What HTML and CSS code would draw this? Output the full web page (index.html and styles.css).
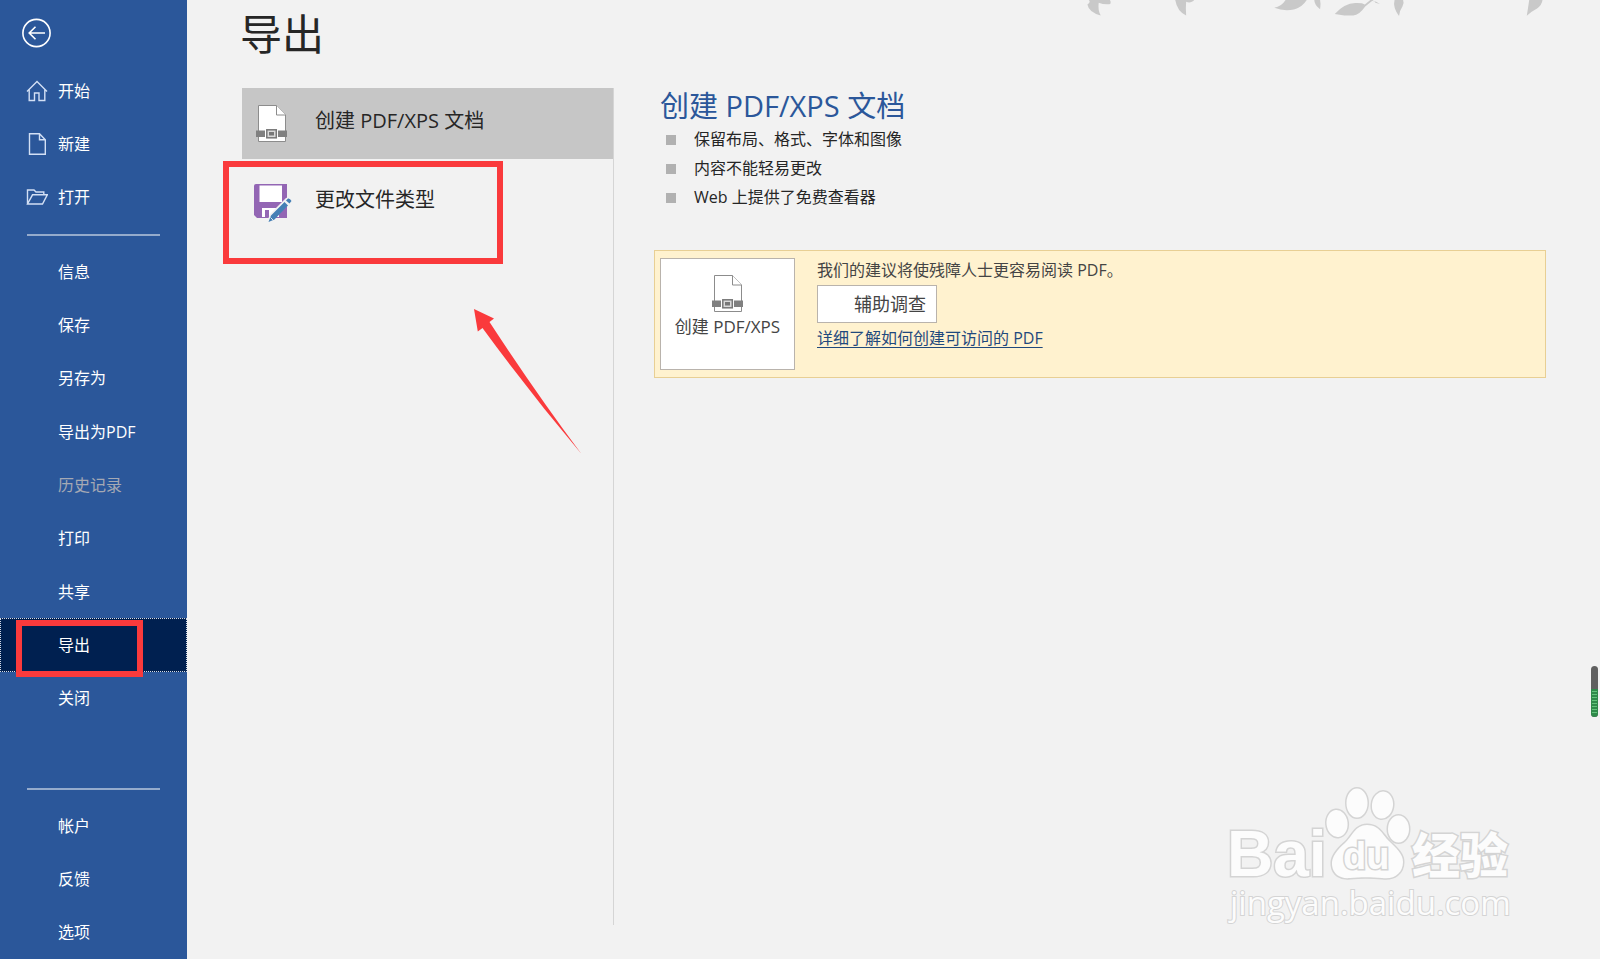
FILE: index.html
```
<!DOCTYPE html>
<html lang="zh-CN">
<head>
<meta charset="utf-8">
<title>导出</title>
<link rel="stylesheet" href="styles.css">
</head>
<body>
<svg class="symbols" aria-hidden="true">
  <symbol id="pdf-doc" viewBox="0 0 31 38">
    <path d="M2.500 .5H20.500L29.500 10V36.500H2.500Z" fill="#fff" stroke="#8c8c8c"/>
    <path d="M20.500 .5V10H29.500" fill="#fff" stroke="#8c8c8c"/>
    <path d="M0 25.500H9V32H0ZM22 25.500H31V32H22Z" fill="#808080"/>
    <rect x="9.500" y="24" width="12" height="10" fill="#fff"/>
    <rect x="10.800" y="24.800" width="9.500" height="8" fill="#d9d9d9" stroke="#777" stroke-width="1.500"/>
    <rect x="13" y="27" width="5" height="3.500" fill="#777"/>
  </symbol>
</svg>
<div class="backstage">
  <nav class="sidebar" aria-label="文件">
    <button class="back" type="button" aria-label="返回">
      <svg viewBox="0 0 30 30" width="30" height="30"><circle cx="14.500" cy="15" r="13.600"/><path d="M23 15H7.500M13.500 8.700L7.200 15L13.500 21.300"/></svg>
    </button>
    <ul class="menu menu-top">
      <li><button class="item" type="button"><svg class="icon" viewBox="0 0 22 22"><path d="M1 11.500L11 1.500L21 11.500M3.200 9.500V20.500H8.500V13H13V20.500H18.800V9.500"/></svg>开始</button></li>
      <li><button class="item" type="button"><svg class="icon" viewBox="0 0 22 22"><path d="M3.500 .8H13.500L19.300 6.800V21.200H3.500ZM13.500 .8V6.800H19.300"/></svg>新建</button></li>
      <li><button class="item" type="button"><svg class="icon" viewBox="0 0 22 22"><path d="M1.500 18V4H8L10 6H17.800V8.800M1.500 18L6.500 8.800H21.300L16.500 18Z"/></svg>打开</button></li>
    </ul>
    <hr class="rule">
    <ul class="menu menu-main">
      <li><button class="item" type="button">信息</button></li>
      <li><button class="item" type="button">保存</button></li>
      <li><button class="item" type="button">另存为</button></li>
      <li><button class="item" type="button">导出为PDF</button></li>
      <li><button class="item" type="button" disabled>历史记录</button></li>
      <li><button class="item" type="button">打印</button></li>
      <li><button class="item" type="button">共享</button></li>
      <li><button class="item current" type="button" aria-current="page">导出<span class="mark mark-nav"></span></button></li>
      <li><button class="item" type="button">关闭</button></li>
    </ul>
    <hr class="rule rule-low">
    <ul class="menu menu-low">
      <li><button class="item" type="button">帐户</button></li>
      <li><button class="item" type="button">反馈</button></li>
      <li><button class="item" type="button">选项</button></li>
    </ul>
  </nav>

  <main class="page">
    <h1 class="title">导出</h1>
    <div class="columns">
      <div class="options">
        <button class="option selected" type="button">
          <svg class="doc" viewBox="0 0 31 38"><use href="#pdf-doc"/></svg>
          <span class="option-label">创建 PDF/XPS 文档</span>
        </button>
        <button class="option" type="button">
          <svg class="floppy" viewBox="0 0 38 38">
            <path d="M2 0H33V34H3L0 31V2Q0 0 2 0Z" fill="#9366b4"/>
            <path d="M5.500 1.500H28V18H5.500ZM8 24H25V33H15V26H11V33H8Z" fill="#fff"/>
            <path d="M13 38L16 30L32 14Q35 12 38 17L22 33Z" fill="#f2f2f2"/>
            <path d="M14.500 38L17 31.500L30.500 18L34 21.500L20.500 35.500ZM32 16.500L34 14.500Q36 14 37.500 17L35.500 19.500Z" fill="#447fb5"/>
            <path d="M16.500 33.500L19 36" stroke="#d8e8f4"/>
          </svg>
          <span class="option-label">更改文件类型</span>
          <span class="mark mark-option"></span>
        </button>
        <svg class="arrow" viewBox="0 0 108 146"><path d="M0 0L20 9.500L15.500 13Q62 84 107.500 145Q56 84 8.500 19L3.800 22.500Z" fill="#fa3a3c"/></svg>
      </div>

      <section class="detail">
        <h2 class="heading">创建 PDF/XPS 文档</h2>
        <ul class="points">
          <li>保留布局、格式、字体和图像</li>
          <li>内容不能轻易更改</li>
          <li>Web 上提供了免费查看器</li>
        </ul>
        <div class="notice">
          <button class="create" type="button">
            <svg class="doc" viewBox="0 0 31 38"><use href="#pdf-doc"/></svg>
            <span>创建 PDF/XPS</span>
          </button>
          <div class="advice">
            <p class="advice-text">我们的建议将使残障人士更容易阅读 PDF。</p>
            <button class="check" type="button">辅助调查</button>
            <a class="more" href="#">详细了解如何创建可访问的 PDF</a>
          </div>
        </div>
      </section>
    </div>
  </main>

  <svg class="leaves" viewBox="0 0 1568 120" aria-hidden="true">
    <g fill="#c9c9c9">
      <path d="M78 0Q85 5 74 13Q78 36 113 45Q104 30 107 8Q122 14 141 12Q144 6 140 0Z"/>
      <path d="M331 0Q337 34 363 45Q361 24 363 5Q374 10 384 3L386 0Z"/>
      <path d="M654 0Q642 19 621 23Q650 34 681 27Q703 20 716 0Z"/>
      <path d="M738 0Q738 14 755 27Q758 12 755 0Z"/>
      <path d="M798 41Q826 10 858 9Q878 8 886 13L902 0H912L908 3Q917 2 930 12L917 8L914 3H907L887 19Q869 45 852 45H826Z"/>
      <path d="M973 0Q967 21 986 47Q988 30 996 19Q1002 10 998 0Z"/>
      <path d="M1367 0Q1364 22 1360 46Q1373 34 1390 25Q1404 15 1406 0Z"/>
    </g>
  </svg>

  <svg class="gauge" viewBox="0 0 8 51" aria-hidden="true">
    <rect x="1" width="7" height="51" rx="3.500" fill="#606060"/>
    <path d="M1 23H8V47.500Q8 51 4.500 51Q1 51 1 47.500Z" fill="#2f8a4a"/>
    <path d="M2 25.500H7M2 28.500H7M2 31.500H7M2 34.500H7M2 37.500H7M2 40.500H7M2 43.500H7M2 46.500H7" stroke="#63c47c"/>
  </svg>

  <svg class="watermark" viewBox="0 0 320 170" role="img" aria-label="Baidu 经验">
    <g class="wm-shape">
      <ellipse cx="147" cy="33" rx="10.500" ry="14.500"/>
      <ellipse cx="172.500" cy="35" rx="10.500" ry="13.500" transform="rotate(8 172 35)"/>
      <ellipse cx="127" cy="53.500" rx="10.500" ry="13.500" transform="rotate(-6 127 53)"/>
      <ellipse cx="188.500" cy="59" rx="10.500" ry="13.500"/>
      <path d="M157 55C145 55 142 67 135 73C128 79 121 87 122 95C123 105 131 109 140 108C150 107 162 107 172 108C184 110 193 103 193 92C193 84 186 78 180 72C173 66 170 55 157 55Z"/>
    </g>
    <text class="wm-text wm-latin" x="17" y="106">Bai</text>
    <text class="wm-text wm-du" x="133" y="99">du</text>
    <text class="wm-text wm-cjk" x="202" y="103">经验</text>
    <text class="wm-text wm-url" x="20" y="145">jingyan.baidu.com</text>
  </svg>
</div>
</body>
</html>
```

FILE: styles.css
```
* { box-sizing: border-box; }

body {
  margin: 0;
  background: #f2f2f2;
  color: #262626;
  font: 16px/24px "Open Sans", "Noto Sans CJK SC", sans-serif;
}

h1, h2, p, ul { margin: 0; padding: 0; font-weight: 400; }
ul { list-style: none; }
button { font: inherit; color: inherit; cursor: pointer; }
.symbols { position: absolute; width: 0; height: 0; }

.backstage {
  position: relative;
  display: flex;
  min-height: 100vh;
  overflow: hidden;
}

/* Sidebar */
.sidebar {
  flex: none;
  width: 187px;
  padding-top: 18px;
  background: #2b579a;
  color: #fff;
}
.back {
  display: block;
  margin: 0 0 16px 22px;
  padding: 0;
  border: 0;
  background: none;
}
.back svg { display: block; fill: none; stroke: #fff; stroke-width: 1.6px; }
.menu { display: grid; grid-auto-rows: 1fr; }
.menu-top { min-height: 160px; }
.menu-main { min-height: 480px; }
.menu-low { min-height: 160px; }
.item {
  position: relative;
  display: flex;
  align-items: center;
  width: 100%;
  height: 100%;
  padding: 0 0 0 58px;
  border: 0;
  background: none;
  text-align: left;
}
.item:disabled { color: #a5a9b4; }
.item.current {
  padding-left: 57px;
  border: 1px dotted #d5dbe6;
  background: #002050;
}
.menu-top .item { gap: 10px; padding-left: 26px; }
.icon {
  width: 22px;
  height: 22px;
  fill: none;
  stroke: #d3e0f5;
  stroke-width: 1.4px;
}
.rule {
  height: 2px;
  margin: 10px 27px 9px;
  border: 0;
  background: #95abcc;
}
.rule-low { margin-top: 63px; margin-bottom: 9px; }

/* Hand-drawn style callouts */
.mark { position: absolute; border: 6px solid #fa3a3c; }
.mark-nav { inset: 1px 43px -6px 15px; }
.mark-option { inset: -6px 110px -26px -19px; }
.arrow {
  position: absolute;
  top: 221px;
  left: 232px;
  width: 108px;
  height: 146px;
}

/* Page */
.page {
  flex: 1;
  display: flex;
  flex-direction: column;
  min-width: 0;
  padding: 4px 54px 34px 53px;
}
.title { font-size: 42px; line-height: 60px; }
.columns { flex: 1; display: flex; margin: 24px 0 0 2px; }
.options {
  position: relative;
  flex: none;
  display: flex;
  flex-direction: column;
  gap: 8px;
  width: 372px;
  border-right: 1px solid #d5d5d5;
}
.option {
  position: relative;
  display: flex;
  align-items: center;
  height: 71px;
  padding: 0 12px;
  border: 0;
  background: none;
  font-size: 20px;
  line-height: 28px;
  text-align: left;
}
.option.selected { background: #c6c6c6; }
.doc { width: 31px; height: 38px; margin: 0 2px; }
.floppy { width: 38px; height: 38px; }
.option-label { padding-bottom: 6px; }
.option .doc { margin-right: 28px; }
.option .floppy { margin-right: 23px; }

.detail { flex: 1; min-width: 0; padding-left: 40px; }
.heading {
  padding-left: 6px;
  color: #2b579a;
  font-size: 29px;
  line-height: 36px;
}
.points { padding-top: 1px; }
.points li {
  display: flex;
  align-items: center;
  gap: 18px;
  padding-left: 12px;
  line-height: 29px;
}
.points li::before {
  content: "";
  width: 10px;
  height: 10px;
  background: #b1b1b1;
}
.notice {
  display: flex;
  gap: 22px;
  margin-top: 38px;
  padding: 7px 5px;
  border: 1px solid #e8cf94;
  background: #fff2cf;
  color: #444;
}
.create {
  flex: none;
  display: flex;
  flex-direction: column;
  align-items: center;
  gap: 2px;
  width: 135px;
  min-height: 112px;
  padding: 16px 0 0;
  border: 1px solid #b9b3ac;
  background: #fff;
  font-size: 17px;
}
.advice {
  display: flex;
  flex-direction: column;
  align-items: flex-start;
}
.check {
  width: 120px;
  height: 38px;
  margin: 3px 0;
  padding: 0 10px 0 0;
  border: 1px solid #b9b3ac;
  background: #fff;
  font-size: 18px;
  text-align: right;
}
.more {
  color: #1f497d;
  text-underline-offset: 3px;
  text-decoration-thickness: 1px;
}

/* Decoration over the page */
.leaves { position: absolute; top: 0; right: 0; width: 540px; height: 41px; }
.gauge { position: absolute; right: 2px; bottom: 242px; width: 8px; height: 51px; }
.watermark { position: absolute; right: 70px; bottom: 19px; width: 320px; height: 170px; }
.wm-shape, .wm-text {
  fill: #fcfcfc;
  stroke: #d4d4d4;
  stroke-width: 3px;
  paint-order: stroke;
}
.wm-latin { font: bold 64px "Liberation Sans", sans-serif; }
.wm-du { font: bold 38px "Liberation Sans", sans-serif; }
.wm-cjk { font: 900 48px "Noto Sans CJK SC", sans-serif; }
.wm-url { font: 33px "Open Sans", sans-serif; stroke-width: 2px; }
```
